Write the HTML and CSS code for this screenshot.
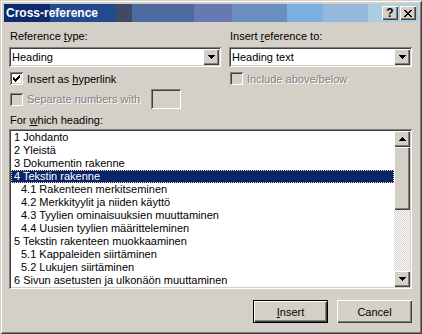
FILE: index.html
```html
<!DOCTYPE html>
<html>
<head>
  <title>Cross-reference</title>
  <link rel="stylesheet" href="styles.css">
</head>
<body>
  <div class="window">
    <div class="titlebar">
      <span class="title">Cross-reference</span>
      <div class="caption-buttons">
        <span class="caption-btn help">?</span>
        <span class="caption-btn close">
          <svg width="8" height="7" viewBox="0 0 8 7">
            <path d="M0 0h2v1h-2z M6 0h2v1h-2z M1 1h2v1h-2z M5 1h2v1h-2z M2 2h4v1h-4z M3 3h2v1h-2z M2 4h4v1h-4z M1 5h2v1h-2z M5 5h2v1h-2z M0 6h2v1h-2z M6 6h2v1h-2z" fill="#000"/>
          </svg>
        </span>
      </div>
    </div>

    <div class="content">
      <div class="top">
        <div class="col col-left">
          <div class="label">Reference <u>t</u>ype:</div>
          <div class="combo">
            <span class="combo-text">Heading</span>
            <span class="drop-btn">
              <svg width="7" height="4" viewBox="0 0 7 4"><path d="M0 0h7v1h-1v1h-1v1h-1v1h-1v-1h-1v-1h-1v-1h-1z" fill="#000"/></svg>
            </span>
          </div>
          <div class="check-row">
            <span class="checkbox">
              <svg width="7" height="7" viewBox="0 0 7 7"><path d="M0 2h1v3h-1z M1 3h1v3h-1z M2 4h1v3h-1z M3 3h1v3h-1z M4 2h1v3h-1z M5 1h1v3h-1z M6 0h1v3h-1z" fill="#000"/></svg>
            </span>
            <span class="check-text">Insert as <u>h</u>yperlink</span>
          </div>
          <div class="check-row numbers-row disabled">
            <span class="checkbox"></span>
            <span class="check-text numbers-text">Separate numbers with</span>
            <span class="textbox"></span>
          </div>
        </div>

        <div class="col col-right">
          <div class="label">Insert <u>r</u>eference to:</div>
          <div class="combo">
            <span class="combo-text">Heading text</span>
            <span class="drop-btn">
              <svg width="7" height="4" viewBox="0 0 7 4"><path d="M0 0h7v1h-1v1h-1v1h-1v1h-1v-1h-1v-1h-1v-1h-1z" fill="#000"/></svg>
            </span>
          </div>
          <div class="check-row disabled">
            <span class="checkbox"></span>
            <span class="check-text">Include above/below</span>
          </div>
        </div>
      </div>

      <div class="label heading-label">For <u>w</u>hich heading:</div>
      <div class="listbox">
        <ul class="items">
          <li class="item">1 Johdanto</li>
          <li class="item">2 Yleistä</li>
          <li class="item">3 Dokumentin rakenne</li>
          <li class="item selected">4 Tekstin rakenne</li>
          <li class="item sub">4.1 Rakenteen merkitseminen</li>
          <li class="item sub">4.2 Merkkityylit ja niiden käyttö</li>
          <li class="item sub">4.3 Tyylien ominaisuuksien muuttaminen</li>
          <li class="item sub">4.4 Uusien tyylien määritteleminen</li>
          <li class="item">5 Tekstin rakenteen muokkaaminen</li>
          <li class="item sub">5.1 Kappaleiden siirtäminen</li>
          <li class="item sub">5.2 Lukujen siirtäminen</li>
          <li class="item">6 Sivun asetusten ja ulkonäön muuttaminen</li>
        </ul>
        <div class="scrollbar">
          <span class="scroll-btn">
            <svg width="7" height="4" viewBox="0 0 7 4"><path d="M3 0h1v1h1v1h1v1h1v1h-7v-1h1v-1h1v-1h1z" fill="#000"/></svg>
          </span>
          <span class="thumb"></span>
          <span class="track"></span>
          <span class="scroll-btn">
            <svg width="7" height="4" viewBox="0 0 7 4"><path d="M0 0h7v1h-1v1h-1v1h-1v1h-1v-1h-1v-1h-1v-1h-1z" fill="#000"/></svg>
          </span>
        </div>
      </div>

      <div class="buttons">
        <span class="default-frame"><span class="button"><u>I</u>nsert</span></span>
        <span class="button">Cancel</span>
      </div>
    </div>
  </div>
</body>
</html>
```

FILE: styles.css
```css
* {
  box-sizing: border-box;
}

body {
  margin: 0;
  font-family: "Liberation Sans", Arial, sans-serif;
  font-size: 11px;
  color: #000;
  background: #d4d0c8;
}

.window {
  width: 422px;
  height: 334px;
  padding: 4px;
  background: #d4d0c8;
  box-shadow: inset 1px 1px #d4d0c8, inset -1px -1px #404040,
              inset 2px 2px #fff, inset -2px -2px #808080;
}

/* title bar */
.titlebar {
  display: flex;
  align-items: center;
  height: 18px;
  padding-left: 2px;
  background: linear-gradient(to right,
    #0c2a6e 0 46px, #23498f 46px 112px, #3e4a66 112px 128px,
    #4e6ba1 128px 190px, #6679b2 190px 228px, #6b8ec0 228px 283px,
    #7bb0e0 283px 319px, #96b8dc 319px 364px, #a8cee2 364px);
}

.title {
  flex: 1;
  color: #fff;
  font-weight: bold;
  font-size: 12px;
}

.caption-buttons {
  display: flex;
  gap: 2px;
  margin-right: 2px;
}

.caption-btn {
  display: flex;
  align-items: center;
  justify-content: center;
  width: 16px;
  height: 14px;
  background: #d4d0c8;
  box-shadow: inset 1px 1px #fff, inset -1px -1px #404040, inset -2px -2px #808080;
}

.help {
  font-weight: bold;
  font-size: 12px;
  line-height: 14px;
  padding-bottom: 1px;
}

/* content */
.content {
  padding: 8px 6px 0 5px;
}

.top {
  display: flex;
  gap: 8px;
}

.col-left {
  width: 212px;
}

.col-right {
  width: 183px;
}

.label {
  height: 13px;
  line-height: 13px;
  padding-left: 1px;
}

.combo {
  display: flex;
  align-items: center;
  height: 20px;
  margin-top: 4px;
  padding: 2px;
  background: #fff;
  box-shadow: inset 1px 1px #808080, inset -1px -1px #fff,
              inset 2px 2px #404040, inset -2px -2px #d4d0c8;
}

.combo-text {
  flex: 1;
  padding-left: 1px;
}

.drop-btn,
.scroll-btn {
  display: flex;
  align-items: center;
  justify-content: center;
  width: 16px;
  height: 16px;
  background: #d4d0c8;
  box-shadow: inset 1px 1px #fff, inset -1px -1px #404040, inset -2px -2px #808080;
}

.check-row {
  display: flex;
  align-items: center;
  height: 15px;
  margin-top: 4px;
  padding-left: 1px;
}

.checkbox {
  display: flex;
  align-items: center;
  justify-content: center;
  width: 13px;
  height: 13px;
  background: #fff;
  box-shadow: inset 1px 1px #808080, inset -1px -1px #fff,
              inset 2px 2px #404040, inset -2px -2px #d4d0c8;
}

.check-text {
  margin-left: 4px;
}

.disabled .checkbox {
  background: #d4d0c8;
}

.disabled .check-text {
  color: #808080;
  text-shadow: 1px 1px #fff;
}

.numbers-row {
  height: 20px;
  margin-top: 3px;
}

.numbers-text {
  width: 124px;
}

.textbox {
  width: 30px;
  height: 20px;
  box-shadow: inset 1px 1px #808080, inset -1px -1px #fff,
              inset 2px 2px #404040, inset -2px -2px #d4d0c8;
}

.heading-label {
  margin-top: 5px;
}

/* list */
.listbox {
  display: flex;
  width: 403px;
  height: 160px;
  margin-top: 2px;
  padding: 2px;
  background: #fff;
  box-shadow: inset 1px 1px #808080, inset -1px -1px #fff,
              inset 2px 2px #404040, inset -2px -2px #d4d0c8;
}

.items {
  flex: 1;
  margin: 0;
  padding: 0;
  list-style: none;
  overflow: hidden;
}

.item {
  height: 13px;
  line-height: 13px;
  padding-left: 3px;
  white-space: nowrap;
}

.item.sub {
  padding-left: 10px;
}

.item.selected {
  background: #0a246a;
  color: #fff;
  outline: 1px dotted #f5db95;
  outline-offset: -1px;
}

.scrollbar {
  display: flex;
  flex-direction: column;
  width: 16px;
}

.thumb {
  height: 63px;
  background: #d4d0c8;
  box-shadow: inset 1px 1px #fff, inset -1px -1px #404040, inset -2px -2px #808080;
}

.track {
  flex: 1;
  background: repeating-conic-gradient(#fff 0 25%, #d4d0c8 0 50%) 0 0 / 2px 2px;
}

/* buttons */
.buttons {
  display: flex;
  justify-content: flex-end;
  gap: 9px;
  width: 403px;
  margin-top: 11px;
}

.button {
  display: flex;
  align-items: center;
  justify-content: center;
  width: 75px;
  height: 23px;
  background: #d4d0c8;
  box-shadow: inset 1px 1px #fff, inset -1px -1px #404040, inset -2px -2px #808080;
}

.default-frame {
  display: flex;
  border: 1px solid #000;
}

.default-frame .button {
  width: 73px;
  height: 21px;
}
```
